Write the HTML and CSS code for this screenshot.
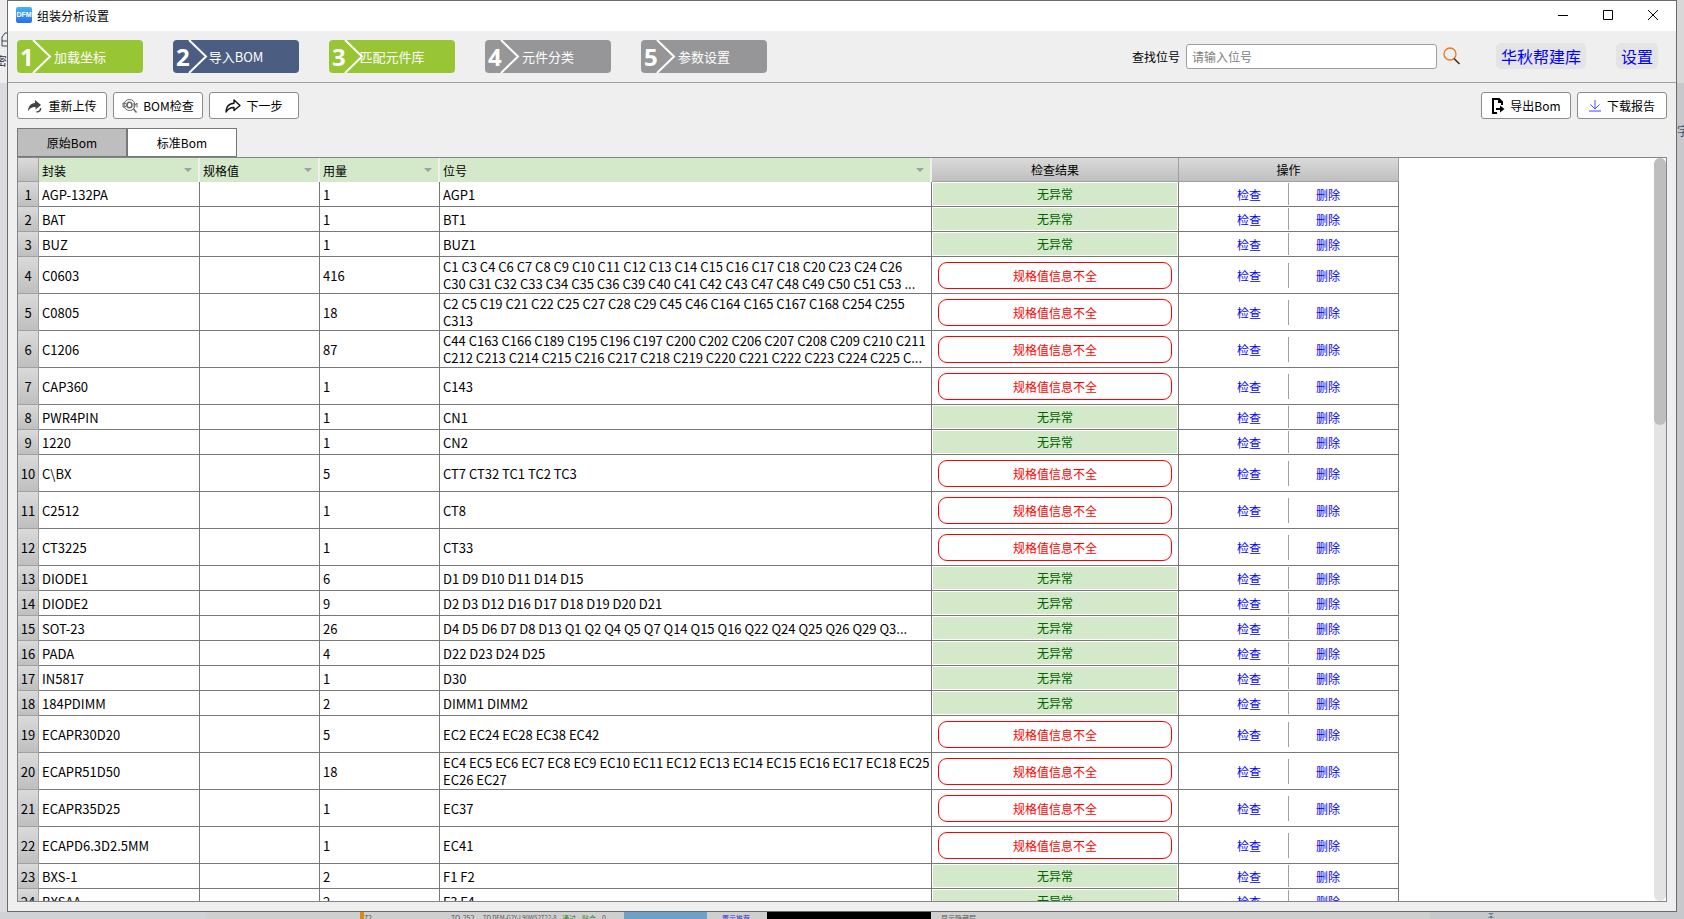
FILE: index.html
```html
<!DOCTYPE html>
<html lang="zh-CN">
<head>
    <meta charset="UTF-8">
    <meta name="viewport" content="width=device-width, initial-scale=1.0">
    <title>组装分析设置</title>
    <link rel="stylesheet" href="styles.css">
</head>
<body>
<div class="desktop">
    <div class="desk-left">
        <svg width="7" height="20" viewBox="0 0 7 20"><path d="M7 1H5L2 5V14H7M2 9H7" fill="none" stroke="#3c4450"/></svg>
        <span>密</span>
    </div>

    <main class="window">
        <header class="titlebar">
            <span class="logo">DFM</span>
            <h1>组装分析设置</h1>
            <div class="win-buttons">
                <button type="button" aria-label="最小化"><svg width="12" height="12" viewBox="0 0 12 12"><path d="M1 6.5h10"/></svg></button>
                <button type="button" aria-label="最大化"><svg width="12" height="12" viewBox="0 0 12 12"><path d="M1.5 1.5h9v9h-9z"/></svg></button>
                <button type="button" aria-label="关闭"><svg width="12" height="12" viewBox="0 0 12 12"><path d="M1 1l10 10M11 1L1 11"/></svg></button>
            </div>
        </header>

        <nav class="steps">
            <button type="button" class="step done"><b>1</b><svg viewBox="0 0 20 33"><path d="M1 0L18 16.500L1 33"/></svg>加载坐标</button>
            <button type="button" class="step current"><b>2</b><svg viewBox="0 0 20 33"><path d="M1 0L18 16.500L1 33"/></svg>导入BOM</button>
            <button type="button" class="step done"><b>3</b><svg viewBox="0 0 20 33"><path d="M1 0L18 16.500L1 33"/></svg>匹配元件库</button>
            <button type="button" class="step"><b>4</b><svg viewBox="0 0 20 33"><path d="M1 0L18 16.500L1 33"/></svg>元件分类</button>
            <button type="button" class="step"><b>5</b><svg viewBox="0 0 20 33"><path d="M1 0L18 16.500L1 33"/></svg>参数设置</button>

            <div class="search">
                <label for="search">查找位号</label>
                <input type="text" id="search" placeholder="请输入位号">
                <button type="button" class="search-btn" aria-label="查找">
                    <svg width="18" height="18" viewBox="0 0 18 18" fill="none"><circle cx="7" cy="7" r="6" stroke="#f0761c" stroke-width="1.300"/><path d="M11 11.500L16.500 17" stroke="#333" stroke-width="1.600"/></svg>
                </button>
            </div>
            <button type="button" class="pill library">华秋帮建库</button>
            <button type="button" class="pill">设置</button>
        </nav>

        <div class="toolbar">
            <button type="button" class="tool">
                <svg width="16" height="16" viewBox="0 0 16 16"><path d="M8 2l6 5-5.500 4.500V9C5 9 3 10 1 13.500 1 8.500 3.500 5.500 8 5z" fill="#444"/><path d="M13.500 10c.5 2-1 4-4 4" fill="none" stroke="#444" stroke-width="1.500"/></svg>
                重新上传
            </button>
            <button type="button" class="tool">
                <svg width="16" height="16" viewBox="0 0 16 16" fill="none" stroke="#666"><circle cx="7.500" cy="7" r="5.500"/><path d="M11.500 11l3 3.500" stroke-width="1.500"/><path d="M1 5v4h1.500a1 1 0 0 0 0-4zM12 9.500V5l1.500 2L15 5v4.500"/><ellipse cx="7.500" cy="7" rx="2.500" ry="2.800" stroke-width="1.500"/></svg>
                BOM检查
            </button>
            <button type="button" class="tool">
                <svg width="16" height="16" viewBox="0 0 16 16" fill="none" stroke="#111" stroke-width="1.400"><path d="M9 2l6 5.500L9 12.500V9.500C5 9.300 3 11 1 14 1.200 9 4 5.500 9 5.200z" stroke-linejoin="round"/></svg>
                下一步
            </button>
            <button type="button" class="tool export">
                <svg width="14" height="18" viewBox="0 0 14 18"><path d="M6 16H2V2h6l3 3v3" fill="none" stroke="#000" stroke-width="2"/><path d="M7 1l5 5H7z"/><path d="M5 12h5" stroke="#000" stroke-width="2"/><path d="M9 8.500l4.500 3.500L9 15.500z"/></svg>
                导出Bom
            </button>
            <button type="button" class="tool report">
                <svg width="12" height="14" viewBox="0 0 12 14" fill="none" stroke="#4a4aff"><path d="M6 1v9M1.500 5.500L6 10l4.500-4.500"/><path d="M0 12h12" stroke="#a0a0ff" stroke-width="2"/></svg>
                下载报告
            </button>
        </div>

        <div class="tabs">
            <button type="button" class="tab">原始Bom</button>
            <button type="button" class="tab active">标准Bom</button>
        </div>

        <div class="grid">
            <div class="table-wrap">
                <table>
                    <colgroup>
                        <col class="c-num"><col class="c-pkg"><col class="c-small"><col class="c-small"><col class="c-ref"><col class="c-result"><col class="c-action">
                    </colgroup>
                    <thead>
                        <tr>
                            <th></th>
                            <th class="filter">封装</th>
                            <th class="filter">规格值</th>
                            <th class="filter">用量</th>
                            <th class="filter">位号</th>
                            <th class="plain">检查结果</th>
                            <th class="plain">操作</th>
                        </tr>
                    </thead>
                    <tbody id="rows"></tbody>
                </table>
            </div>
            <div class="scrollbar"><div class="thumb"></div></div>
        </div>
    </main>

    <div class="desk-right"><span>字</span></div>

    <div class="desk-bottom">
        <i class="orange"></i><span class="w-num">72</span>
        <span class="w-pkg">TO-252</span>
        <span class="w-model">TO DFM-G2Y-L90WS2T22-8</span>
        <span class="w-tag ok">通过</span>
        <span class="w-tag ok">贴合</span>
        <span class="w-zero">0</span>
        <i class="blue"></i>
        <span class="w-link">置示推荐</span>
        <i class="black"></i>
        <span class="w-layer">显示隐藏层</span>
        <svg width="6" height="7" viewBox="0 0 6 7"><path d="M0 1h6L3 3zM0 6L3 3.500 6 6z" fill="#6b7a9c"/></svg>
    </div>
</div>

<script src="script.js"></script>
</body>
</html>
```
FILE: styles.css
```css
* {
    box-sizing: border-box;
}

body {
    margin: 0;
    font-family: "Noto Sans CJK SC", "Noto Sans", sans-serif;
    font-size: 12px;
    line-height: 17px;
    color: #000;
}

button, input {
    font: inherit;
    color: inherit;
}

button {
    padding: 0;
    border: none;
    background: none;
    cursor: pointer;
}

/* desktop behind the window */
.desktop {
    display: grid;
    grid-template-columns: 7px minmax(0, 1fr) 7px;
    grid-template-rows: minmax(0, 1fr) 7px;
    height: 100vh;
    background: #dcdee1;
    overflow: hidden;
}

.desk-left {
    background: linear-gradient(#ededee 83px, #d9dbde 83px);
    padding-top: 32px;
    overflow: hidden;
    display: flex;
    flex-direction: column;
    align-items: flex-end;
    color: #334;
}

.desk-right {
    background: linear-gradient(#d8d8d9 83px, #c6c8cc 83px);
    padding-top: 122px;
    overflow: hidden;
    color: #456;
}

.desk-bottom {
    grid-column: 1 / 4;
    display: flex;
    align-items: flex-start;
    padding-left: 360px;
    overflow: hidden;
    background: linear-gradient(90deg, #d0d2d5 206px, #cfcfcf 206px, #cfcfcf 1430px, #c6c8cc 1430px);
    font-size: 7px;
    line-height: 12px;
    white-space: nowrap;
    color: #555;
}

.desk-bottom i {
    height: 8px;
    flex: none;
}

.desk-bottom span {
    flex: none;
}

.orange {
    width: 4px;
    background: #d98a10;
}

.blue {
    width: 83px;
    background: #6fa0c8;
}

.black {
    width: 164px;
    margin-right: 10px;
    background: #000;
}

.w-num {
    width: 87px;
}

.w-pkg {
    width: 32px;
}

.w-model {
    width: 79px;
    font-size: 6px;
}

.w-tag {
    width: 20px;
}

.w-zero {
    width: 22px;
}

.w-link {
    width: 60px;
    padding-left: 15px;
    color: #33c;
}

.w-layer {
    width: 547px;
}

.ok {
    color: #282;
}

/* window */
.window {
    display: flex;
    flex-direction: column;
    border: 1px solid #6b6b6b;
    background: #efefef;
}

.titlebar {
    display: flex;
    align-items: center;
    height: 30px;
    flex: none;
    padding: 0 17px 2px 8px;
    background: #fff;
}

.logo {
    width: 16px;
    height: 16px;
    border-radius: 2px;
    background: linear-gradient(#48b4f5, #2a6ff0);
    color: #fff;
    font: bold 7px/16px "Liberation Sans", sans-serif;
    text-align: center;
}

h1 {
    margin: 0 0 0 5px;
    font-size: 12px;
    font-weight: normal;
}

.win-buttons {
    display: flex;
    gap: 33px;
    margin-left: auto;
}

.win-buttons svg {
    display: block;
    fill: none;
    stroke: #000;
}

.steps {
    display: flex;
    align-items: center;
    gap: 30px;
    height: 52px;
    flex: none;
    padding: 0 18px 1px 9px;
    border-bottom: 1px solid #a0a0a0;
}

.step {
    position: relative;
    width: 126px;
    height: 33px;
    flex: none;
    border-radius: 4px;
    background: #969698;
    color: #fff;
    font-size: 13px;
    line-height: 33px;
}

.step.done {
    background: #97c533;
}

.step.current {
    background: #4b5d81;
}

.step b {
    position: absolute;
    left: 3px;
    top: 0;
    font-family: "Noto Sans", sans-serif;
    font-size: 24px;
}

.step svg {
    position: absolute;
    left: 15px;
    top: 0;
    width: 20px;
    height: 33px;
    fill: none;
    stroke: #fff;
    stroke-width: 2;
}

.search {
    display: flex;
    align-items: center;
    margin-left: auto;
}

.search input {
    width: 251px;
    height: 25px;
    margin: 0 6px;
    padding: 0 5px;
    border: 1px solid #a0a0a0;
    border-radius: 3px;
    background: #fff;
}

.search input::placeholder {
    color: #808080;
}

.search-btn svg {
    display: block;
}

.pill {
    height: 26px;
    flex: none;
    padding: 0 5px;
    border-radius: 5px;
    background: #e4e4e4;
    color: #00f;
    font-size: 16px;
    line-height: 26px;
}

.library {
    margin-left: 5px;
}

.toolbar {
    display: flex;
    gap: 6px;
    flex: none;
    padding: 9px 9px 0;
}

.tool {
    display: flex;
    align-items: center;
    justify-content: center;
    gap: 5px;
    width: 90px;
    height: 27px;
    border: 1px solid #8c8c8c;
    border-radius: 3px;
    background: #fff;
}

.export {
    margin-left: auto;
}

.report {
    gap: 6px;
}

.tabs {
    display: flex;
    flex: none;
    padding: 9px 9px 0;
}

.tab {
    width: 110px;
    height: 29px;
    border: 1px solid #787878;
    background: #fff;
}

.tab:not(.active) {
    background: #bebebe;
}

.grid {
    display: flex;
    flex: 1;
    min-height: 0;
    margin: 0 9px 9px;
    border: 1px solid #82858e;
    background: #fff;
}

.table-wrap {
    flex: 1;
    overflow: hidden;
}

.scrollbar {
    width: 12px;
    border-radius: 6px;
    background: #e3e3e3;
}

.thumb {
    height: 36%;
    border-radius: 6px;
    background: #bebebe;
}

/* bom table */
table {
    width: 1381px;
    table-layout: fixed;
    border-spacing: 0;
}

.c-num { width: 21px; }
.c-pkg { width: 161px; }
.c-small { width: 120px; }
.c-ref { width: 492px; }
.c-result { width: 247px; }
.c-action { width: 220px; }

th {
    height: 24px;
    padding: 0;
    font-weight: normal;
}

thead th:first-child, .plain {
    border-right: 1px solid #a0a0a0;
    border-bottom: 1px solid #a0a0a0;
    background: linear-gradient(#dadada, #bfbfbf);
}

.filter {
    position: relative;
    padding-left: 3px;
    border-right: 2px solid #efefef;
    background: #d4e9ca;
    text-align: left;
}

/* sort arrow */
.filter::after {
    content: "";
    position: absolute;
    right: 6px;
    top: 10px;
    border: 4px solid transparent;
    border-top-color: #a0a0a0;
    border-bottom: none;
}

tbody th {
    border-right: 1px solid #a0a0a0;
    border-bottom: 1px solid #a0a0a0;
    background: linear-gradient(#dadada, #bfbfbf);
    font-size: 13px;
}

td {
    height: 25px;
    padding: 0 3px;
    border-right: 1px solid #787878;
    border-bottom: 1px solid #787878;
    font-size: 13px;
}

.tall td {
    height: 37px;
}

td.ref {
    padding-right: 0;
    overflow: hidden;
    white-space: pre;
}

td.result {
    padding: 1px;
    text-align: center;
    font-size: 12px;
}

.result span {
    display: block;
    height: 22px;
    line-height: 22px;
    background: #d4e9ca;
    color: #006400;
}

.tall .result span {
    height: 27px;
    margin: 0 5px;
    border: 1px solid #f00;
    border-radius: 9px;
    background: #fff;
    color: #f00;
    line-height: 25px;
}

td.action {
    padding: 0;
    font-size: 12px;
}

.action div {
    display: flex;
    align-items: center;
    justify-content: center;
    gap: 27px;
}

.action i {
    width: 1px;
    height: 22px;
    background: #a0a0a0;
}

.tall .action i {
    height: 25px;
}

.action a {
    color: #00f;
    text-decoration: none;
}
```
FILE: script.js
```js
// [package, count, designators, spec value missing]
const bom = [
    ['AGP-132PA', 1, 'AGP1', false],
    ['BAT', 1, 'BT1', false],
    ['BUZ', 1, 'BUZ1', false],
    ['C0603', 416, 'C1 C3 C4 C6 C7 C8 C9 C10 C11 C12 C13 C14 C15 C16 C17 C18 C20 C23 C24 C26\nC30 C31 C32 C33 C34 C35 C36 C39 C40 C41 C42 C43 C47 C48 C49 C50 C51 C53 ...', true],
    ['C0805', 18, 'C2 C5 C19 C21 C22 C25 C27 C28 C29 C45 C46 C164 C165 C167 C168 C254 C255\nC313', true],
    ['C1206', 87, 'C44 C163 C166 C189 C195 C196 C197 C200 C202 C206 C207 C208 C209 C210 C211\nC212 C213 C214 C215 C216 C217 C218 C219 C220 C221 C222 C223 C224 C225 C...', true],
    ['CAP360', 1, 'C143', true],
    ['PWR4PIN', 1, 'CN1', false],
    ['1220', 1, 'CN2', false],
    ['C\\BX', 5, 'CT7 CT32 TC1 TC2 TC3', true],
    ['C2512', 1, 'CT8', true],
    ['CT3225', 1, 'CT33', true],
    ['DIODE1', 6, 'D1 D9 D10 D11 D14 D15', false],
    ['DIODE2', 9, 'D2 D3 D12 D16 D17 D18 D19 D20 D21', false],
    ['SOT-23', 26, 'D4 D5 D6 D7 D8 D13 Q1 Q2 Q4 Q5 Q7 Q14 Q15 Q16 Q22 Q24 Q25 Q26 Q29 Q3...', false],
    ['PADA', 4, 'D22 D23 D24 D25', false],
    ['IN5817', 1, 'D30', false],
    ['184PDIMM', 2, 'DIMM1 DIMM2', false],
    ['ECAPR30D20', 5, 'EC2 EC24 EC28 EC38 EC42', true],
    ['ECAPR51D50', 18, 'EC4 EC5 EC6 EC7 EC8 EC9 EC10 EC11 EC12 EC13 EC14 EC15 EC16 EC17 EC18 EC25\nEC26 EC27', true],
    ['ECAPR35D25', 1, 'EC37', true],
    ['ECAPD6.3D2.5MM', 1, 'EC41', true],
    ['BXS-1', 2, 'F1 F2', false],
    ['BXSAA', 2, 'F3 F4', false]
];

let html = '';
bom.forEach(([pkg, count, refs, missing], i) => {
    html += `<tr class="${missing ? 'tall' : ''}">
        <th>${i + 1}</th>
        <td>${pkg}</td>
        <td></td>
        <td>${count}</td>
        <td class="ref">${refs}</td>
        <td class="result"><span>${missing ? '规格值信息不全' : '无异常'}</span></td>
        <td class="action"><div><a href="#">检查</a><i></i><a href="#">删除</a></div></td>
    </tr>`;
});
document.getElementById('rows').innerHTML = html;
```
